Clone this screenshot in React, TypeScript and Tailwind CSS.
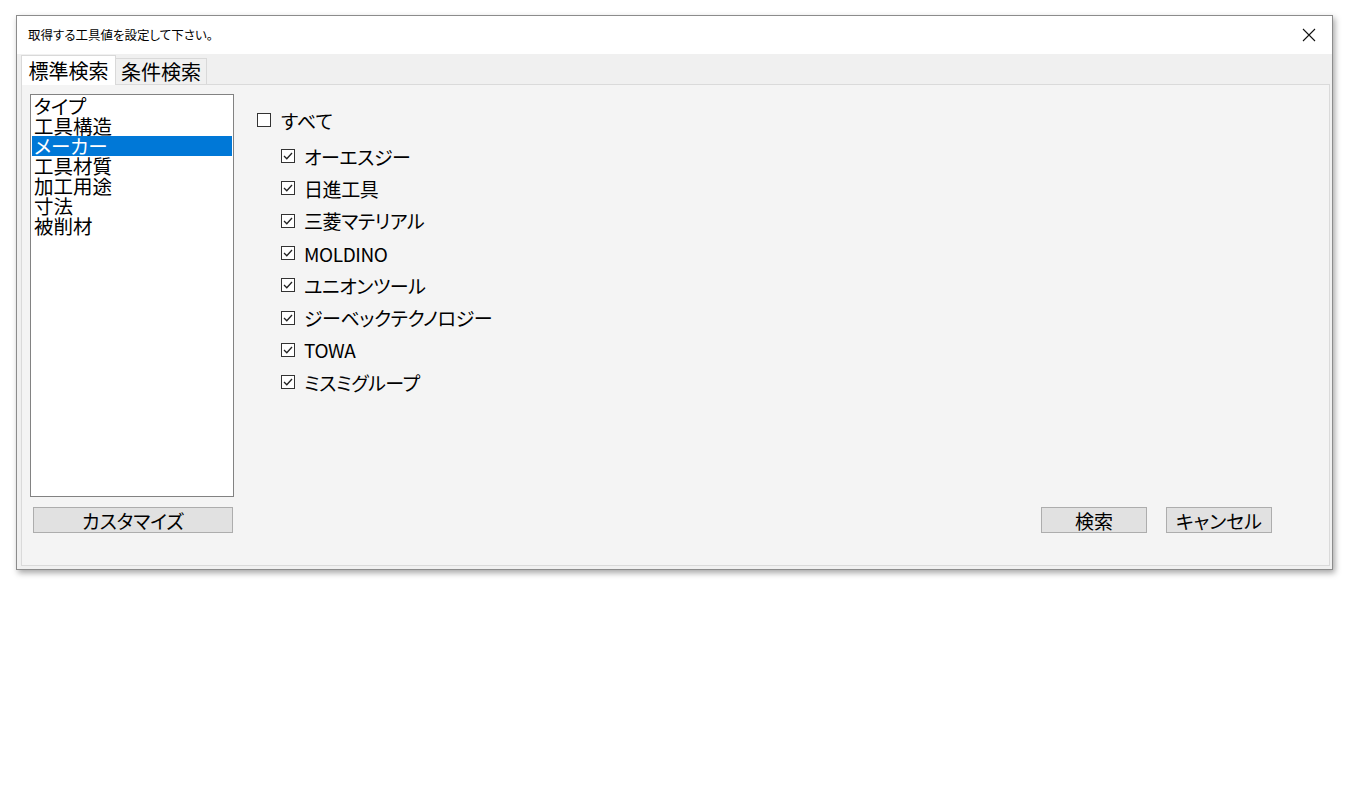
import React, { useState } from 'react';

const FONT = "font-['Noto_Sans_CJK_JP','Noto_Sans',sans-serif] [font-feature-settings:'palt']";

const categories = ['タイプ', '工具構造', 'メーカー', '工具材質', '加工用途', '寸法', '被削材'];

const makers = [
  'オーエスジー',
  '日進工具',
  '三菱マテリアル',
  'MOLDINO',
  'ユニオンツール',
  'ジーベックテクノロジー',
  'TOWA',
  'ミスミグループ',
];

const CheckBox = ({ checked }: { checked: boolean }) => (
  <svg width="14" height="14" viewBox="0 0 14 14" className="shrink-0">
    <rect x="0.5" y="0.5" width="13" height="13" fill="#fff" stroke="#333" strokeWidth="1" />
    {checked && <polyline points="3,7 5.8,9.8 11,4" fill="none" stroke="#222" strokeWidth="1.3" />}
  </svg>
);

const WinButton = ({ label, className }: { label: string; className?: string }) => (
  <button
    className={`h-[26px] bg-[#e1e1e1] border border-[#adadad] text-[19px] leading-none text-black flex items-center justify-center ${className ?? ''}`}
  >
    {label}
  </button>
);

export default function App() {
  const [selected, setSelected] = useState(2);
  const [all, setAll] = useState(false);
  const [checks, setChecks] = useState(makers.map(() => true));

  return (
    <div className={`w-[1350px] h-[800px] bg-white pt-[15px] pl-[16px] ${FONT}`}>
      <div className="w-[1317px] h-[555px] border border-[#8c8c8c] bg-[#f0f0f0] flex flex-col shadow-[2px_3px_6px_rgba(0,0,0,0.35)]">
        {/* title bar */}
        <div className="h-[38px] bg-white flex items-center justify-between pl-[11px] pr-[16px] shrink-0">
          <span className="text-[12.5px] text-black">取得する工具値を設定して下さい。</span>
          <svg width="14" height="14" viewBox="0 0 14 14">
            <path d="M1 1 L13 13 M13 1 L1 13" stroke="#111" strokeWidth="1.1" />
          </svg>
        </div>

        {/* tabs */}
        <div className="h-[30px] flex items-end pl-[4px] shrink-0">
          <div className="h-[30px] w-[95px] bg-white border border-b-0 border-[#d9d9d9] flex items-center justify-center text-[20px] leading-none relative top-px z-10">
            標準検索
          </div>
          <div className="h-[26px] w-[91px] bg-[#f0f0f0] border border-l-0 border-b-0 border-[#d9d9d9] flex items-center justify-center text-[20px] leading-none">
            条件検索
          </div>
        </div>

        {/* panel */}
        <div className="flex-1 ml-[4px] mr-[2px] mb-[3px] bg-[#f4f4f4] border border-[#dadada] flex pt-[9px] pl-[8px] pr-[57px] pb-[32px]">
          <div className="w-[204px] flex flex-col shrink-0">
            <div className="h-[403px] bg-white border border-[#828282] p-px">
              {categories.map((c, i) => (
                <div
                  key={c}
                  onClick={() => setSelected(i)}
                  className={`h-[20px] text-[19.5px] leading-[20px] pl-[2px] whitespace-nowrap ${
                    selected === i ? 'bg-[#0078d7] text-white' : 'text-black'
                  }`}
                >
                  {c}
                </div>
              ))}
            </div>
            <WinButton label="カスタマイズ" className="mt-[10px] ml-[3px] w-[200px]" />
          </div>

          <div className="flex-1 flex flex-col pl-[23px]">
            <div className="pt-[13px]">
              <label className="h-[26px] flex items-center gap-[10px] text-[19px] text-black" onClick={() => setAll(!all)}>
                <CheckBox checked={all} />
                <span className="leading-none">すべて</span>
              </label>
              <div className="pl-[24px] pt-[7px]">
                {makers.map((m, i) => (
                  <label
                    key={m}
                    className="h-[32.3px] flex items-center gap-[9px] text-[19px] tracking-[-0.4px] text-black"
                    onClick={() => setChecks(checks.map((v, j) => (j === i ? !v : v)))}
                  >
                    <CheckBox checked={checks[i]} />
                    <span className="leading-none whitespace-nowrap">{m}</span>
                  </label>
                ))}
              </div>
            </div>
            <div className="mt-auto flex justify-end gap-[19px]">
              <WinButton label="検索" className="w-[106px]" />
              <WinButton label="キャンセル" className="w-[106px]" />
            </div>
          </div>
        </div>
      </div>
    </div>
  );
}
